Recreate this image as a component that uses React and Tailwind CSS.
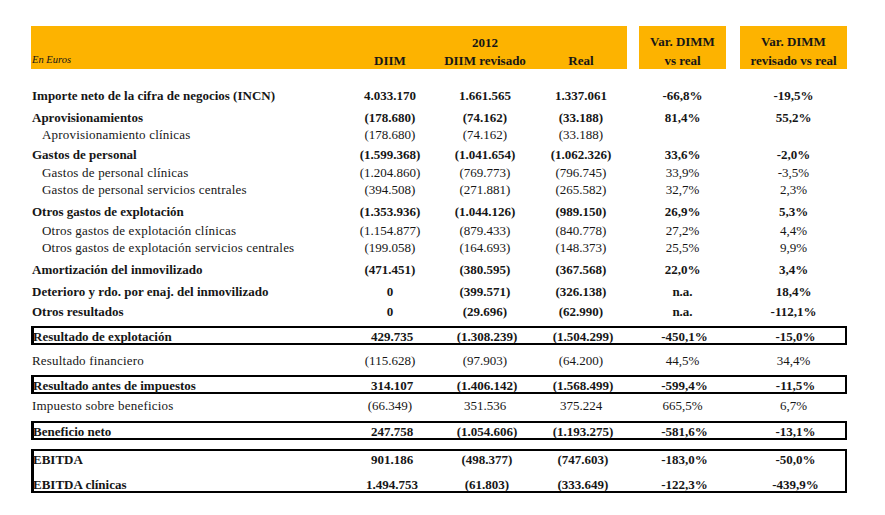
import React from 'react';

const cols = 'grid grid-cols-[314px_90px_100px_92px_12px_87px_14px_107px]';

// gap = espacio antes de la fila, kind: 'b' negrita, 's' sub-partida, 'n' normal
const rows = [
  { label: 'Importe neto de la cifra de negocios (INCN)', v: ['4.033.170', '1.661.565', '1.337.061', '-66,8%', '-19,5%'], kind: 'b', gap: 'mt-[18px]' },
  { label: 'Aprovisionamientos', v: ['(178.680)', '(74.162)', '(33.188)', '81,4%', '55,2%'], kind: 'b', gap: 'mt-[5px]' },
  { label: 'Aprovisionamiento clínicas', v: ['(178.680)', '(74.162)', '(33.188)', '', ''], kind: 's', gap: 'mt-0' },
  { label: 'Gastos de personal', v: ['(1.599.368)', '(1.041.654)', '(1.062.326)', '33,6%', '-2,0%'], kind: 'b', gap: 'mt-[3px]' },
  { label: 'Gastos de personal clínicas', v: ['(1.204.860)', '(769.773)', '(796.745)', '33,9%', '-3,5%'], kind: 's', gap: 'mt-[1px]' },
  { label: 'Gastos de personal servicios centrales', v: ['(394.508)', '(271.881)', '(265.582)', '32,7%', '2,3%'], kind: 's', gap: 'mt-0' },
  { label: 'Otros gastos de explotación', v: ['(1.353.936)', '(1.044.126)', '(989.150)', '26,9%', '5,3%'], kind: 'b', gap: 'mt-[5px]' },
  { label: 'Otros gastos de explotación clínicas', v: ['(1.154.877)', '(879.433)', '(840.778)', '27,2%', '4,4%'], kind: 's', gap: 'mt-[2px]' },
  { label: 'Otros gastos de explotación servicios centrales', v: ['(199.058)', '(164.693)', '(148.373)', '25,5%', '9,9%'], kind: 's', gap: 'mt-0' },
  { label: 'Amortización del inmovilizado', v: ['(471.451)', '(380.595)', '(367.568)', '22,0%', '3,4%'], kind: 'b', gap: 'mt-[5px]' },
  { label: 'Deterioro y rdo. por enaj. del inmovilizado', v: ['0', '(399.571)', '(326.138)', 'n.a.', '18,4%'], kind: 'b', gap: 'mt-[5px]' },
  { label: 'Otros resultados', v: ['0', '(29.696)', '(62.990)', 'n.a.', '-112,1%'], kind: 'b', gap: 'mt-[3px]' },
  { box: true, gap: 'mt-[6px]', items: [{ label: 'Resultado de explotación', v: ['429.735', '(1.308.239)', '(1.504.299)', '-450,1%', '-15,0%'] }] },
  { label: 'Resultado financiero', v: ['(115.628)', '(97.903)', '(64.200)', '44,5%', '34,4%'], kind: 'n', gap: 'mt-[7px]' },
  { box: true, gap: 'mt-[6px]', items: [{ label: 'Resultado antes de impuestos', v: ['314.107', '(1.406.142)', '(1.568.499)', '-599,4%', '-11,5%'] }] },
  { label: 'Impuesto sobre beneficios', v: ['(66.349)', '351.536', '375.224', '665,5%', '6,7%'], kind: 'n', gap: 'mt-[3px]' },
  { box: true, gap: 'mt-[7px]', items: [{ label: 'Beneficio neto', v: ['247.758', '(1.054.606)', '(1.193.275)', '-581,6%', '-13,1%'] }] },
  {
    box: true, gap: 'mt-[9px]', items: [
      { label: 'EBITDA', v: ['901.186', '(498.377)', '(747.603)', '-183,0%', '-50,0%'] },
      { label: 'EBITDA clínicas', v: ['1.494.753', '(61.803)', '(333.649)', '-122,3%', '-439,9%'] },
    ],
  },
];

function Cells({ v, bold }) {
  const w = bold ? 'font-bold' : 'font-normal';
  return (
    <>
      <div className={`text-center ${w}`}>{v[0]}</div>
      <div className={`text-center ${w}`}>{v[1]}</div>
      <div className={`text-center ${w}`}>{v[2]}</div>
      <div />
      <div className={`text-center ${w}`}>{v[3]}</div>
      <div />
      <div className={`text-center ${w}`}>{v[4]}</div>
    </>
  );
}

function Row({ r }) {
  if (r.box) {
    return (
      <div className={`${r.gap} border-2 border-l-[3px] border-black`}>
        {r.items.map((it, i) => (
          <div key={it.label} className={`${cols} h-[15px] items-center ${i > 0 ? 'mt-[10px]' : ''} -ml-[1px]`}>
            <div className="font-bold">{it.label}</div>
            <Cells v={it.v} bold />
          </div>
        ))}
      </div>
    );
  }
  const bold = r.kind === 'b';
  return (
    <div className={`${cols} ${r.gap} h-[17px] items-center`}>
      <div className={`${bold ? 'font-bold' : 'tracking-[0.2px]'} ${r.kind === 's' ? 'pl-[11px]' : 'pl-[1px]'}`}>{r.label}</div>
      <Cells v={r.v} bold={bold} />
    </div>
  );
}

export default function App() {
  return (
    <div className="w-[885px] h-[515px] bg-white text-[#161616] text-[13px] leading-[17px] font-['Liberation_Serif',serif] pt-[26px] pl-[31px]">
      <div className={`${cols} h-[43px]`}>
        <div className="bg-[#fdb300] flex items-end pb-[1px] pl-[1px]">
          <span className="italic text-[10.5px]">En Euros</span>
        </div>
        <div className="bg-[#fdb300] flex items-end justify-center pb-0 font-bold">DIIM</div>
        <div className="bg-[#fdb300] flex flex-col items-center justify-end pb-0 font-bold">
          <span className="leading-[19px]">2012</span>
          <span>DIIM revisado</span>
        </div>
        <div className="bg-[#fdb300] flex items-end justify-center pb-0 font-bold">Real</div>
        <div />
        <div className="bg-[#fdb300] flex flex-col items-center justify-end pb-0 font-bold">
          <span className="leading-[20px]">Var. DIMM</span>
          <span>vs real</span>
        </div>
        <div />
        <div className="bg-[#fdb300] flex flex-col items-center justify-end pb-0 font-bold">
          <span className="leading-[20px]">Var. DIMM</span>
          <span>revisado vs real</span>
        </div>
      </div>
      <div className="w-[816px]">
        {rows.map((r, i) => (
          <Row key={i} r={r} />
        ))}
      </div>
    </div>
  );
}
